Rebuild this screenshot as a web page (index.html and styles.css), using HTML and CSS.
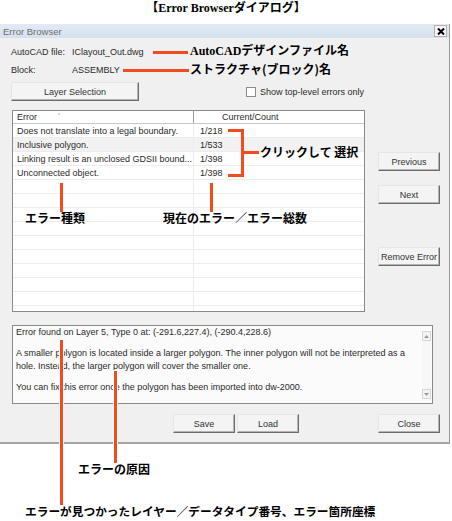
FILE: index.html
```html
<!DOCTYPE html>
<html lang="ja">
<head>
<meta charset="utf-8">
<title>Error Browser</title>
<link rel="stylesheet" href="styles.css">
</head>
<body>
<div class="page">
  <div class="caption">【Error Browserダイアログ】</div>
  <div class="dialog">
    <div class="titlebar">
      <span class="title">Error Browser</span>
      <span class="xbtn"><svg width="8" height="7" viewBox="0 0 8 7"><path d="M1 0.5 L7 6.5 M7 0.5 L1 6.5" stroke="#000" stroke-width="2"/></svg></span>
    </div>
    <div class="content">
      <div class="info">
        <div class="row"><span class="lbl">AutoCAD file:</span><span>IClayout_Out.dwg</span></div>
        <div class="row"><span class="lbl">Block:</span><span>ASSEMBLY</span></div>
      </div>
      <div class="toolbar">
        <div class="btn wide">Layer Selection</div>
        <label class="check"><span class="box"></span><span>Show top-level errors only</span></label>
      </div>
      <div class="main">
        <div class="list">
          <div class="lhead">
            <div class="c1">Error <span class="sort">ˊ</span></div>
            <div class="c2 hc2">Current/Count</div>
          </div>
          <div class="lrow"><div class="c1">Does not translate into a legal boundary.</div><div class="c2">1/218</div></div>
          <div class="lrow sel"><div class="c1">Inclusive polygon.</div><div class="c2">1/533</div></div>
          <div class="lrow"><div class="c1">Linking result is an unclosed GDSII bound...</div><div class="c2">1/398</div></div>
          <div class="lrow"><div class="c1">Unconnected object.</div><div class="c2">1/398</div></div>
          <div class="lrow"><div class="c1"></div><div class="c2"></div></div>
          <div class="lrow"><div class="c1"></div><div class="c2"></div></div>
          <div class="lrow"><div class="c1"></div><div class="c2"></div></div>
          <div class="lrow"><div class="c1"></div><div class="c2"></div></div>
          <div class="lrow"><div class="c1"></div><div class="c2"></div></div>
          <div class="lrow"><div class="c1"></div><div class="c2"></div></div>
          <div class="lrow"><div class="c1"></div><div class="c2"></div></div>
          <div class="lrow"><div class="c1"></div><div class="c2"></div></div>
          <div class="lrow"><div class="c1"></div><div class="c2"></div></div>
          <div class="lrow"><div class="c1"></div><div class="c2"></div></div>
        </div>
        <div class="side">
          <div class="btn">Previous</div>
          <div class="btn next">Next</div>
          <div class="btn remove">Remove Error</div>
        </div>
      </div>
      <div class="detail">
        <div class="dtext">
          <p>Error found on Layer 5, Type 0 at: (-291.6,227.4), (-290.4,228.6)</p>
          <p>A smaller polygon is located inside a larger polygon. The inner polygon will not be interpreted as a hole. Instead, the larger polygon will cover the smaller one.</p>
          <p>You can fix this error once the polygon has been imported into dw-2000.</p>
        </div>
        <div class="scroll">
          <div class="sarrow"><svg width="5" height="3" viewBox="0 0 5 3"><path d="M0 3 L2.5 0 L5 3Z" fill="#9a9a9a"/></svg></div>
          <div class="strack"></div>
          <div class="sarrow"><svg width="5" height="3" viewBox="0 0 5 3"><path d="M0 0 L2.5 3 L5 0Z" fill="#9a9a9a"/></svg></div>
        </div>
      </div>
      <div class="footer">
        <div class="btn save">Save</div>
        <div class="btn load">Load</div>
        <div class="btn close">Close</div>
      </div>
    </div>
  </div>

  <div class="annot">
    <div class="rl h" style="left:153px;top:51px;width:35px"></div>
    <div class="lab serifmix" style="left:190px;top:44px">AutoCADデザインファイル名</div>
    <div class="rl h" style="left:123px;top:69px;width:66px"></div>
    <div class="lab" style="left:190px;top:62px">ストラクチャ(ブロック)名</div>

    <div class="rl h" style="left:228px;top:129px;width:16px"></div>
    <div class="rl v" style="left:241px;top:129px;height:48px"></div>
    <div class="rl h" style="left:228px;top:174px;width:16px"></div>
    <div class="rl h" style="left:243px;top:151px;width:16px"></div>
    <div class="lab" style="left:260px;top:145px">クリックして 選択</div>

    <div class="rl v" style="left:60px;top:183px;height:29px"></div>
    <div class="lab" style="left:25px;top:211px">エラー種類</div>
    <div class="rl v" style="left:210px;top:183px;height:29px"></div>
    <div class="lab" style="left:163px;top:211px">現在のエラー／エラー総数</div>

    <div class="rl v gap" style="left:60px;top:340px;height:165px"></div>
    <div class="rl v gap" style="left:114px;top:371px;height:92px"></div>
    <div class="lab" style="left:78px;top:462px">エラーの原因</div>
    <div class="lab small" style="left:25px;top:504px">エラーが見つかったレイヤー／データタイプ番号、エラー箇所座標</div>
  </div>
</div>
</body>
</html>
```

FILE: styles.css
```css
* { box-sizing: border-box; }
body {
  margin: 0;
  background: #fff;
  font-family: "Liberation Sans", Arial, sans-serif;
  font-size: 9px;
  color: #2a2a2a;
}
.page { position: relative; width: 452px; height: 521px; overflow: hidden; }

.caption {
  height: 24px;
  text-align: center;
  font: bold 12px/16px "Liberation Serif", "Noto Sans CJK JP", serif;
  color: #000;
}

.dialog {
  width: 450px;
  height: 420px;
  background: #f0f0f0;
  border-right: 1px solid #9c9c9c;
  border-bottom: 2px solid #a4a4a4;
}
.titlebar {
  height: 14px;
  background: linear-gradient(#e2eaf4, #d6e1ee);
  display: flex;
  align-items: center;
  justify-content: space-between;
  padding: 0 2px 0 3px;
  color: #6e6e6e;
  font-size: 9.5px;
}
.xbtn {
  width: 13px;
  height: 12px;
  border: 1px solid #b0b0b0;
  background: #f6f6f6;
  display: flex;
  align-items: center;
  justify-content: center;
}

.content { padding: 8px 0 0 11px; }
.info .row { display: flex; height: 12px; line-height: 12px; }
.info .row + .row { margin-top: 6px; }
.lbl { width: 61px; }

.toolbar { margin-top: 6px; display: flex; align-items: center; height: 19px; }
.btn {
  width: 62px;
  height: 19px;
  background: #f4f4f4;
  border: 1px solid;
  border-color: #e6e6e6 #6c6c6c #6c6c6c #e6e6e6;
  box-shadow: inset -1px -1px 0 #b4b4b4;
  display: flex;
  align-items: center;
  justify-content: center;
  color: #333;
}
.btn.wide { width: 128px; }
.check { margin-left: 107px; display: flex; align-items: center; gap: 4px; }
.box { width: 10px; height: 10px; border: 1px solid #8c8c8c; background: #fff; }

.main { margin-top: 9px; display: flex; align-items: flex-start; }
.list {
  margin-left: 1px;
  width: 353px;
  height: 202px;
  border: 1px solid #8a8a8a;
  background: #fff;
  overflow: hidden;
}
.lhead {
  display: flex;
  height: 13px;
  line-height: 12px;
  border-bottom: 1px solid #c8c8c8;
  background: #fff;
}
.lhead .c1 { border-right: 1px solid #9a9a9a; }
.sort { margin-left: 18px; color: #777; }
.lrow {
  display: flex;
  height: 14px;
  line-height: 15px;
  border-bottom: 1px solid #ececec;
}
.lrow.sel { background: #f2f2f2; }
.c1 { width: 181px; padding-left: 4px; white-space: nowrap; overflow: hidden; }
.lrow .c1 { border-right: 1px solid #ececec; }
.c2 { flex: 1; padding-left: 6px; }
.lhead .hc2 { padding-left: 28px; }

.side { margin-left: 13px; padding-top: 42px; display: flex; flex-direction: column; }
.side .next { margin-top: 14px; }
.side .remove { margin-top: 43px; }

.detail {
  margin-top: 13px;
  margin-left: 1px;
  width: 421px;
  height: 79px;
  border: 1px solid #8a8a8a;
  background: #fbfbfb;
  display: flex;
}
.dtext { flex: 1; padding: 0 0 0 3px; line-height: 13px; }
.dtext p { margin: 0 0 8px; }
.scroll {
  width: 9px;
  margin: 5px 1px 4px 0;
  display: flex;
  flex-direction: column;
}
.sarrow {
  height: 10px;
  border: 1px solid #d6d6d6;
  background: #f4f4f4;
  display: flex;
  align-items: center;
  justify-content: center;
}
.strack { flex: 1; background: #f7f7f7; }

.footer { margin-top: 10px; display: flex; }
.footer .save { margin-left: 162px; }
.footer .load { margin-left: 2px; }
.footer .close { margin-left: 79px; }

.annot { position: absolute; left: 0; top: 0; width: 452px; height: 521px; pointer-events: none; }
.rl { position: absolute; background: #f24b1e; }
.rl.h { height: 3px; }
.rl.v { width: 3px; }
.rl.gap { box-shadow: 0 0 0 1px #fff; }
.lab {
  position: absolute;
  white-space: nowrap;
  font: bold 12px/14px "Noto Sans CJK JP", sans-serif;
  color: #000;
}
.lab.small { font-size: 11.7px; }
.lab.serifmix { font-family: "Liberation Serif", "Noto Sans CJK JP", serif; }
```
